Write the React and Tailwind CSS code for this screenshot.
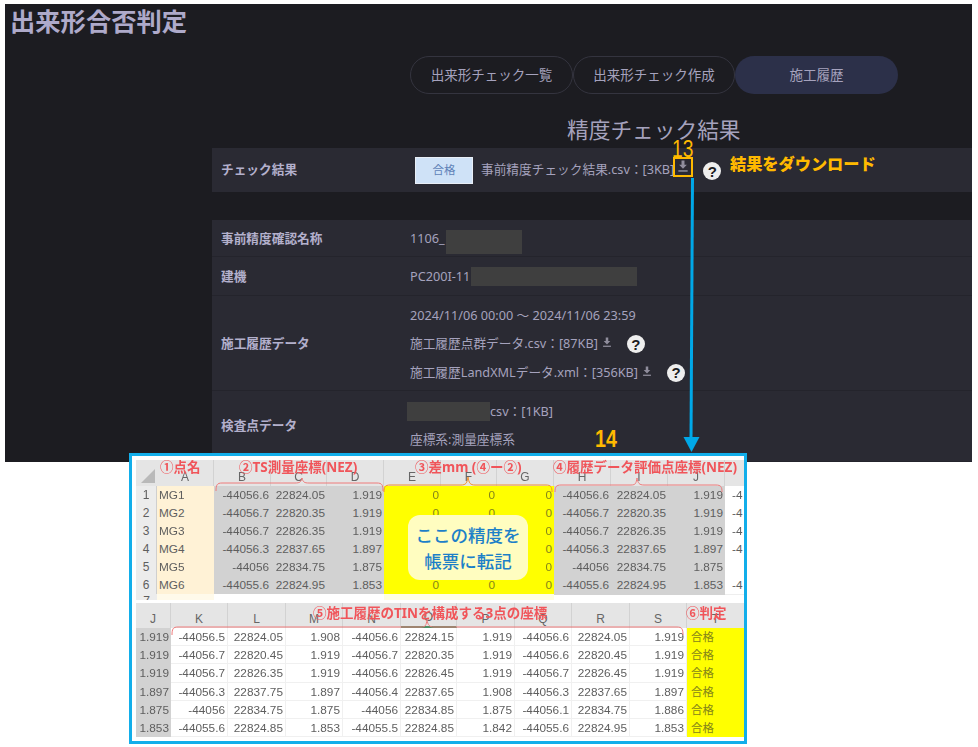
const sans = { fontFamily: '"Noto Sans", "Noto Sans CJK JP", sans-serif' };
const sheet = { fontFamily: '"Liberation Sans", "Noto Sans CJK JP", sans-serif' };

function DownloadIcon({ className }) {
  return (
    <svg viewBox="0 0 12 14" className={className} fill="#8f8d9c">
      <path d="M4.4 0.5h3.2v4.6h2.6L6 9.4 1.8 5.1h2.6z" />
      <rect x="1" y="11" width="10" height="1.6" />
    </svg>
  );
}

function Help({ className = "" }) {
  return (
    <span className={`flex h-[18px] w-[18px] shrink-0 items-center justify-center rounded-full bg-[#eeeeee] font-['Liberation_Sans'] text-[15px] font-bold leading-none text-[#1c1c21] ${className}`}>
      ?
    </span>
  );
}

function Mask({ className }) {
  return <span className={`absolute bg-[#3f3f3f] ${className}`} />;
}

function Row({ label, className, children }) {
  return (
    <div className={`flex items-center border-b border-[#24242c] bg-[#2a2a33] pt-[2px] ${className}`}>
      <div className="w-[198px] shrink-0 pl-[9px] text-[12.7px] font-bold text-[#b3b0cc]">{label}</div>
      <div className="min-w-0 flex-1">{children}</div>
    </div>
  );
}

const cols1 = "grid-cols-[21px_57px_57px_56px_57px_57px_56px_57px_57px_57px_57px_20px]";
const cols2 = "grid-cols-[35px_57px_58px_57px_58px_56px_58px_57px_58px_57px_58px]";

const t1 = [
  ["MG1", "-44056.6", "22824.05", "1.919", "0", "0", "0", "-44056.6", "22824.05", "1.919", "-4"],
  ["MG2", "-44056.7", "22820.35", "1.919", "0", "0", "0", "-44056.7", "22820.35", "1.919", "-4"],
  ["MG3", "-44056.7", "22826.35", "1.919", "0", "0", "0", "-44056.7", "22826.35", "1.919", "-4"],
  ["MG4", "-44056.3", "22837.65", "1.897", "0", "0", "0", "-44056.3", "22837.65", "1.897", "-4"],
  ["MG5", "-44056", "22834.75", "1.875", "0", "0", "0", "-44056", "22834.75", "1.875", ""],
  ["MG6", "-44055.6", "22824.95", "1.853", "0", "0", "0", "-44055.6", "22824.95", "1.853", "-4"],
];

const t2 = [
  ["1.919", "-44056.5", "22824.05", "1.908", "-44056.6", "22824.15", "1.919", "-44056.6", "22824.05", "1.919"],
  ["1.919", "-44056.7", "22820.45", "1.919", "-44056.7", "22820.35", "1.919", "-44056.6", "22820.45", "1.919"],
  ["1.919", "-44056.7", "22826.35", "1.919", "-44056.6", "22826.45", "1.919", "-44056.7", "22826.45", "1.919"],
  ["1.897", "-44056.3", "22837.75", "1.897", "-44056.4", "22837.65", "1.908", "-44056.3", "22837.65", "1.897"],
  ["1.875", "-44056", "22834.75", "1.875", "-44056", "22834.85", "1.875", "-44056.1", "22834.75", "1.886"],
  ["1.853", "-44055.6", "22824.85", "1.853", "-44055.5", "22824.85", "1.842", "-44055.6", "22824.95", "1.853"],
];

const headCell = "flex items-end justify-center border-r border-[#d2d2d2] bg-[#e5e5e5] pb-[1px] text-[12px] leading-[16px] text-[#666666]";

function cell1(i) {
  if (i === 0) return "bg-[#fff2d6] pl-[2px] text-left text-[#5e5e5e]";
  if (i <= 3 || (i >= 7 && i <= 9)) return "bg-[#d2d2d2] pr-[2px] text-right text-[#5e5e5e]";
  if (i <= 6) return "bg-[#ffff00] pr-[2px] text-right text-[#85851a]";
  return "border-b border-[#eeeeee] bg-white pl-[7px] text-left text-[#5e5e5e]";
}

function cell2(i) {
  if (i === 0) return "bg-[#d2d2d2] pr-[2px] text-right";
  return "border-b border-r border-[#f0f0f0] bg-white pr-[2px] text-right";
}

function Note({ className, children }) {
  return (
    <span style={sans} className={`absolute whitespace-nowrap text-[13.5px] font-bold leading-none text-[#f0555a] ${className}`}>
      {children}
    </span>
  );
}

export default function App() {
  return (
    <div className="h-[747px] w-[978px] overflow-hidden bg-white pl-[5px] pt-[4px]" style={sans}>
      <div className="relative h-[458px] w-[967px] overflow-hidden bg-[#1c1c21]">
        <h1 className="h-[34px] pl-[5px] text-[25.3px] font-bold leading-[34px] text-[#aeaaca]">出来形合否判定</h1>
        <div className="mt-[18px] flex h-[38px] pl-[405px] text-[13.5px] text-[#a5a2bd]">
          <div className="flex w-[163px] items-center justify-center rounded-full border border-[#34343f]">出来形チェック一覧</div>
          <div className="flex w-[162px] items-center justify-center rounded-full border border-[#34343f]">出来形チェック作成</div>
          <div className="flex w-[163px] items-center justify-center rounded-full bg-[#2c3049]">施工履歴</div>
        </div>
        <div className="flex h-[54px] items-end pb-[2px] pl-[562px] text-[21.7px] leading-[32px] text-[#a5a2bd]">精度チェック結果</div>

        <div className="ml-[207px] text-[12.7px] text-[#a5a2bd]">
          <div className="flex h-[44px] items-center bg-[#2a2a33]">
            <div className="w-[198px] shrink-0 pl-[9px] font-bold text-[#b3b0cc]">チェック結果</div>
            <div className="ml-[5px] flex h-[27px] w-[58px] items-center justify-center border border-[#e8eef6] bg-[#cfe2f7] text-[11.5px] text-[#5f83b8]">合格</div>
            <span className="ml-[8px] whitespace-nowrap">事前精度チェック結果.csv：[3KB]</span>
            <DownloadIcon className="-mt-[7px] ml-[3px] h-[13px] w-[12px]" />
            <Help className="ml-[14px] mt-[2px]" />
          </div>
          <div className="h-[28px]" />
          <Row label="事前精度確認名称" className="relative h-[37px]">
            <span>1106_</span>
            <Mask className="left-[234px] top-[10px] h-[24px] w-[76px]" />
          </Row>
          <Row label="建機" className="relative h-[39px]">
            <span>PC200I-11</span>
            <Mask className="left-[259px] top-[10px] h-[19px] w-[166px]" />
          </Row>
          <Row label="施工履歴データ" className="h-[95px]">
            <div className="flex flex-col gap-[9px] leading-[19.5px]">
              <div>2024/11/06 00:00 ～ 2024/11/06 23:59</div>
              <div className="flex items-center whitespace-nowrap">
                施工履歴点群データ.csv：[87KB]
                <DownloadIcon className="-mt-[3px] ml-[4px] h-[11px] w-[10px]" />
                <Help className="ml-[15px]" />
              </div>
              <div className="flex items-center whitespace-nowrap">
                施工履歴LandXMLデータ.xml：[356KB]
                <DownloadIcon className="-mt-[3px] ml-[4px] h-[11px] w-[10px]" />
                <Help className="ml-[15px]" />
              </div>
            </div>
          </Row>
          <Row label="検査点データ" className="relative h-[71px] pb-[3px]">
            <div className="flex flex-col gap-[9px] leading-[19px]">
              <div className="pl-[80px]">csv：[1KB]</div>
              <div>座標系:測量座標系</div>
            </div>
            <Mask className="left-[195px] top-[11px] h-[19px] w-[83px]" />
          </Row>
        </div>

        {/* callouts */}
        <span className="absolute left-[667px] top-[133px] origin-left scale-x-80 font-['Liberation_Sans'] text-[24px] leading-none text-[#ffb900]">13</span>
        <span className="absolute left-[668px] top-[153px] h-[20px] w-[20px] border-2 border-[#ffb900]" />
        <span className="absolute left-[725px] top-[150px] text-[16.2px] font-black leading-[20px] text-[#ffb900]">結果をダウンロード</span>
        <span className="absolute left-[590px] top-[423px] origin-left scale-x-[.82] font-['Liberation_Sans'] text-[24px] font-bold leading-none text-[#ffb900]">14</span>
        <svg className="absolute left-[675px] top-[174px]" width="26" height="276" viewBox="0 0 26 276">
          <path d="M11 0h3l-1.5 262h-3z" fill="#00a8e8" />
          <path d="M3.5 259h16l-8 15z" fill="#00a8e8" />
        </svg>
      </div>

      <div className="relative z-10 ml-[124px] -mt-[9px] h-[291px] w-[618px] overflow-hidden border-[3px] border-[#12aeea] bg-white pl-[4px] pt-[4px]" style={sheet}>
        <div className="blur-[0.45px]">
          <div className={`grid ${cols1} h-[26px]`}>
            <div className="relative bg-[#e5e5e5]">
              <svg className="absolute bottom-[3px] right-[2px]" width="14" height="14" viewBox="0 0 14 14"><path d="M14 0v14H0z" fill="#b9b9b9" /></svg>
            </div>
            {["A", "B", "C", "D", "E", "F", "G", "H", "I", "J", "K"].map((h) => (
              <div key={h} className={headCell}>{h === "K" ? "" : h}</div>
            ))}
          </div>
          {t1.map((r, ri) => (
            <div key={ri} className={`grid ${cols1} h-[18px] text-[11.8px] leading-[18px]`}>
              <div className="border-b border-r border-[#cfcfcf] bg-[#ececec] text-center text-[12px] text-[#5e5e5e]">{ri + 1}</div>
              {r.map((c, i) => (
                <div key={i} className={`overflow-hidden whitespace-nowrap ${cell1(i)}`}>{c}</div>
              ))}
            </div>
          ))}
          <div className={`grid ${cols1} h-[6px] overflow-hidden text-[12px] leading-[14px] text-[#5e5e5e]`}>
            <div className="bg-[#ececec] text-center">7</div>
            <div className="bg-[#fffaea]" />
            <div className="col-span-3 bg-white" />
            <div className="col-span-3 bg-[#ffffe0]" />
          </div>
          <div className="h-[3px]" />
          <div className={`grid ${cols2} h-[25px]`}>
            {["J", "K", "L", "M", "N", "O", "P", "Q", "R", "S", "T"].map((h) => (
              <div key={h} className={`${headCell} ${h === "O" ? "border-b-2 border-b-[#4f8f66] bg-[#cfcfcf]" : ""}`}>{h}</div>
            ))}
          </div>
          {t2.map((r, ri) => (
            <div key={ri} className={`grid ${cols2} h-[18.2px] text-[11.8px] leading-[18px] text-[#5e5e5e]`}>
              {r.map((c, i) => (
                <div key={i} className={`overflow-hidden whitespace-nowrap ${cell2(i)}`}>{c}</div>
              ))}
              <div className="bg-[#ffff00] pl-[4px] text-[11.5px] text-[#85851a]">合格</div>
            </div>
          ))}
        </div>

        {/* annotations over the sheet: origin is x=132, y=456 */}
        <svg className="absolute left-0 top-0" width="612" height="285" viewBox="0 0 612 285" fill="none" stroke="#ee7a7a" strokeWidth="1">
          <path d="M84 35c0-6 1-8 6-8h73c5 0 6-1 7-5 1 4 2 5 7 5h68c5 0 6 2 6 8" />
          <path d="M252 36c0-5 1-7 6-7h71c5 0 6-2 7-8 1 6 2 8 7 8h71c5 0 6 2 6 7" stroke="#f09030" />
          <path d="M423 36c0-5 1-7 6-7h70c5 0 5-2 6-7 1 5 2 7 7 7h72c5 0 6 2 6 7" />
          <path d="M40 179c0-6 1-8 6-8h243c5 0 5-2 6-7 1 5 2 7 7 7h243c5 0 6 2 6 8" />
        </svg>
        <Note className="left-[28px] top-[5px]">①点名</Note>
        <Note className="left-[107px] top-[5px]">②TS測量座標(NEZ)</Note>
        <Note className="left-[283px] top-[5px]">③差mm (④ー②)</Note>
        <Note className="left-[421px] top-[5px]">④履歴データ評価点座標(NEZ)</Note>
        <Note className="left-[181px] top-[151px]">⑤施工履歴のTINを構成する3点の座標</Note>
        <Note className="left-[554px] top-[151px]">⑥判定</Note>
        <div style={sans} className="absolute left-[276px] top-[59px] flex h-[65px] w-[120px] flex-col items-center justify-center rounded-[12px] bg-[#fffdc0] text-[17.5px] font-medium leading-[26px] text-[#1d80c8]">
          <span>ここの精度を</span>
          <span>帳票に転記</span>
        </div>
      </div>
    </div>
  );
}
